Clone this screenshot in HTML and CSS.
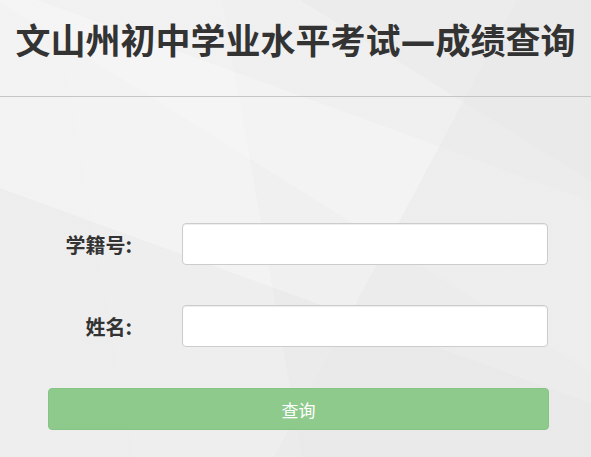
FILE: index.html
```html
<!DOCTYPE html>
<html lang="zh-CN">
<head>
<meta charset="utf-8">
<title>文山州初中学业水平考试—成绩查询</title>
<link rel="stylesheet" href="styles.css">
</head>
<body>
<div class="page">
  <header class="header">
    <h1 class="title">文山州初中学业水平考试<span class="dash">—</span>成绩查询</h1>
  </header>
  <form class="form">
    <div class="row">
      <label class="label">学籍号:</label>
      <input class="input" type="text">
    </div>
    <div class="row">
      <label class="label">姓名:</label>
      <input class="input" type="text">
    </div>
    <button class="btn" type="button">查询</button>
  </form>
</div>
</body>
</html>
```

FILE: styles.css
```css
html, body {
  margin: 0;
  padding: 0;
}
body {
  width: 591px;
  height: 457px;
  overflow: hidden;
  font-family: "Noto Sans CJK SC", "Noto Sans", sans-serif;
  background-color: #efefef;
  background-image:
    linear-gradient(118deg, rgba(255,255,255,0) 62%, rgba(232,232,232,0.5) 62%),
    linear-gradient(32deg, rgba(255,255,255,0) 55%, rgba(255,255,255,0.2) 55%, rgba(255,255,255,0.2) 78%, rgba(255,255,255,0) 78%),
    linear-gradient(200deg, rgba(236,236,236,0.6) 30%, rgba(244,244,244,0.5) 30%, rgba(244,244,244,0.5) 60%, rgba(234,234,234,0.5) 60%),
    linear-gradient(80deg, #f1f1f1 20%, #f2f2f2 20%, #f2f2f2 45%, #ececec 45%);
}
.page {
  width: 591px;
  height: 457px;
}
.header {
  height: 96px;
  border-bottom: 1px solid #c6c6c6;
  display: flex;
  justify-content: center;
}
.title {
  margin: 16px 0 0;
  font-size: 35px;
  line-height: 46px;
  font-weight: 700;
  color: #333;
  white-space: nowrap;
}
.dash {
  font-family: "DejaVu Sans", sans-serif;
  font-weight: 700;
}
.form {
  padding: 126px 43px 0 48px;
  display: flex;
  flex-direction: column;
}
.row {
  display: flex;
  align-items: center;
  height: 42px;
  margin-bottom: 40px;
}
.label {
  width: 84px;
  text-align: right;
  font-size: 20px;
  font-weight: 700;
  color: #333;
  margin-right: 50px;
  white-space: nowrap;
}
.input {
  box-sizing: border-box;
  width: 366px;
  height: 42px;
  border: 1px solid #cccccc;
  border-radius: 4px;
  background: #fff;
  box-shadow: inset 0 1px 1px rgba(0,0,0,0.075);
  margin: 0;
  padding: 6px 12px;
  font-size: 14px;
}
.btn {
  margin-top: 1px;
  box-sizing: border-box;
  width: 501px;
  height: 42px;
  border: 1px solid #86c486;
  border-radius: 4px;
  background: #8fca8d;
  color: #fff;
  font-family: "Noto Sans CJK SC", sans-serif;
  font-size: 17px;
  font-weight: 400;
  padding: 0;
}
```
